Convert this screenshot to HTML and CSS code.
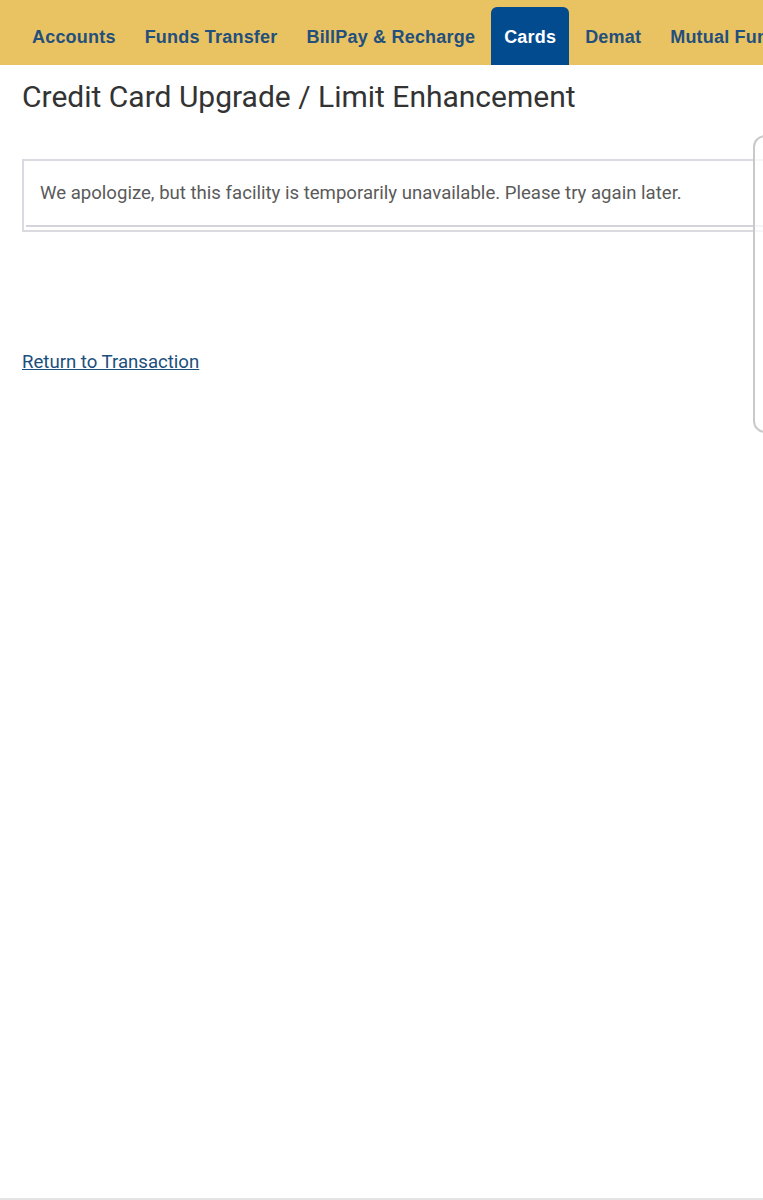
FILE: index.html
```html
<!DOCTYPE html>
<html lang="en">
<head>
<meta charset="utf-8">
<title>Credit Card Upgrade / Limit Enhancement</title>
<link rel="stylesheet" href="styles.css">
</head>
<body>
<div class="page">
  <nav class="topnav">
    <a class="tab">Accounts</a>
    <a class="tab">Funds Transfer</a>
    <a class="tab">BillPay &amp; Recharge</a>
    <a class="tab active">Cards</a>
    <a class="tab">Demat</a>
    <a class="tab">Mutual Funds</a>
  </nav>
  <main class="content">
    <h1 class="title">Credit Card Upgrade / Limit Enhancement</h1>
    <div class="notice">
      <div class="notice-body">We apologize, but this facility is temporarily unavailable. Please try again later.</div>
    </div>
    <a class="return-link" href="#">Return to Transaction</a>
  </main>
  <div class="side-panel"></div>
  <div class="footer"></div>
</div>
</body>
</html>
```
FILE: styles.css
```css
html, body {
  margin: 0;
  padding: 0;
  background: #ffffff;
  overflow: hidden;
}
body {
  font-family: Roboto, "Noto Sans", Arial, sans-serif;
}
.page {
  position: relative;
  min-height: 1200px;
  display: flex;
  flex-direction: column;
}
.topnav {
  display: flex;
  align-items: stretch;
  height: 65px;
  box-sizing: border-box;
  padding: 7px 0 0 19px;
  gap: 3px;
  background: #e9c262;
  white-space: nowrap;
  overflow: hidden;
}
.tab {
  display: flex;
  align-items: center;
  padding: 2px 13px 0 13px;
  font-family: "Liberation Sans", Arial, sans-serif;
  font-weight: bold;
  font-size: 18px;
  letter-spacing: 0.2px;
  color: #234f7c;
  border-radius: 6px 6px 0 0;
}
.tab.active {
  background: #024b8f;
  color: #ffffff;
}
.content {
  padding-left: 22px;
}
.title {
  margin: 14px 0 0 0;
  font-weight: 400;
  font-size: 30px;
  line-height: 36px;
  color: #333333;
}
.notice {
  margin-top: 44px;
  width: 780px;
  border: 2px solid #dadae0;
  padding: 0 0 3px 2px;
}
.notice-body {
  border-bottom: 2px solid #d4d4da;
  padding: 21px 14px;
  font-size: 18.6px;
  line-height: 22px;
  color: #5a5a5a;
  white-space: nowrap;
}
.return-link {
  display: inline-block;
  margin-top: 118px;
  font-size: 18.6px;
  line-height: 24px;
  color: #1b4f7d;
  text-decoration: underline;
}
.side-panel {
  position: absolute;
  left: 753px;
  top: 135px;
  width: 60px;
  height: 294px;
  border: 2px solid #c9c9cc;
  border-radius: 12px 0 0 12px;
  background: rgba(255, 255, 255, 0.75);
}
.footer {
  margin-top: auto;
  height: 2px;
  background: #e3e3e3;
}
```
